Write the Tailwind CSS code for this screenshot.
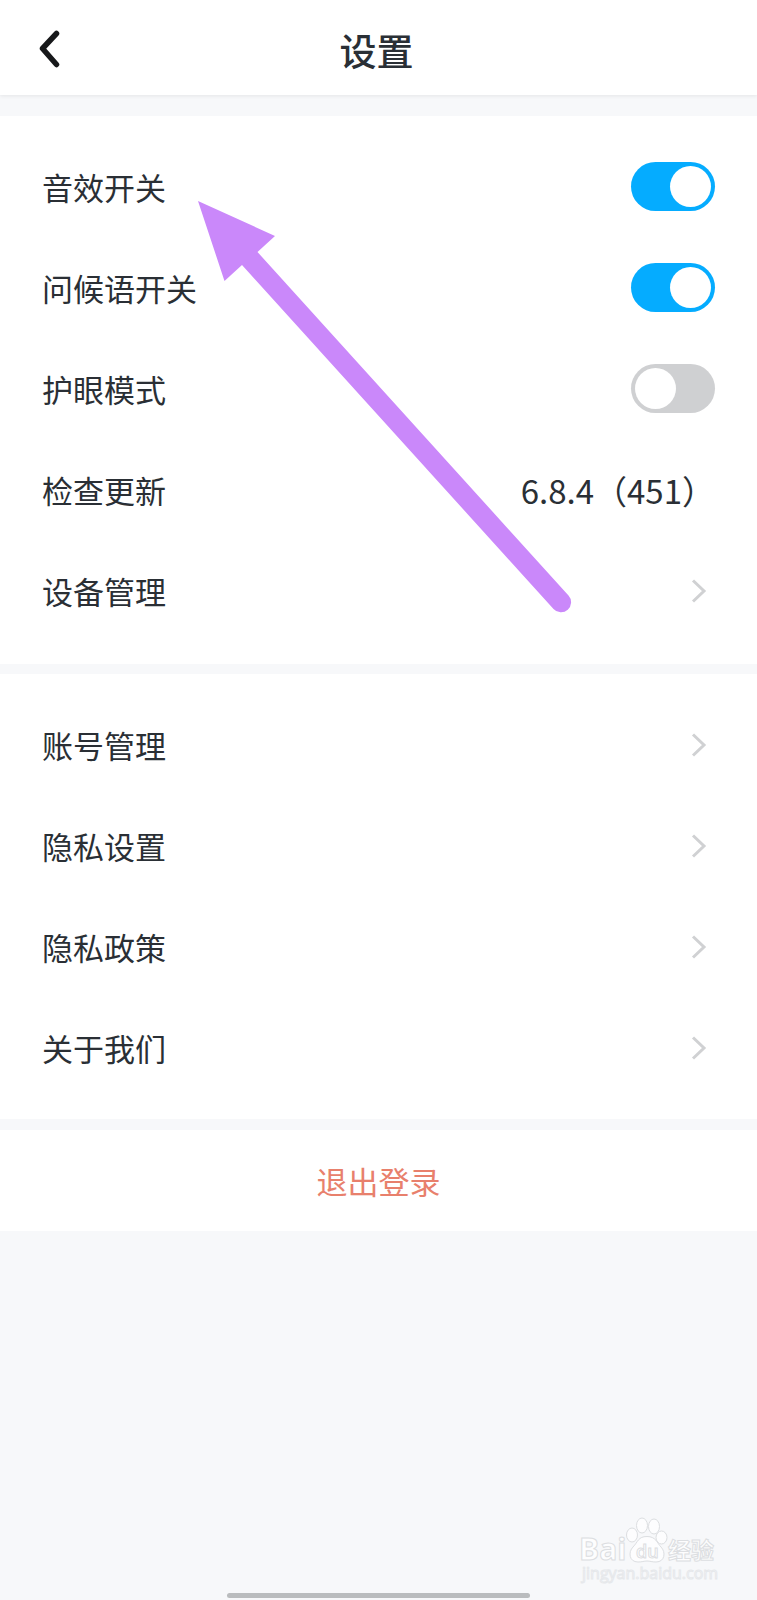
<!DOCTYPE html>
<html lang="zh-CN">
<head>
  <meta charset="UTF-8" />
  <meta name="viewport" content="width=device-width, initial-scale=1.0"/>
  <title>设置</title>
  <script src="https://cdn.jsdelivr.net/npm/@tailwindcss/browser@4"></script>
</head>
<body class="relative flex flex-col min-h-screen bg-[#f7f8fa] text-[#2a2f35] text-[31px] leading-[40px] font-['Noto_Sans_CJK_SC',sans-serif]">

  <header class="grid grid-cols-3 items-center h-[95px] px-9 bg-white shadow-[0_1px_4px_rgba(0,0,0,0.08)]">
    <button type="button" aria-label="返回" class="justify-self-start">
      <svg class="block w-7 h-10" viewBox="0 0 28 40" fill="none" stroke="#17181a" stroke-width="5.500" stroke-linecap="round" stroke-linejoin="round">
        <path d="M20.500 5.500L6.500 20.500L20.500 36.500" />
      </svg>
    </button>
    <h1 class="text-center text-[37px] font-medium pt-1 pr-1">设置</h1>
  </header>

  <main>
    <!-- general -->
    <section class="mt-[21px] pt-5 pb-[23px] px-[42px] bg-white">
      <label class="flex items-center justify-between h-[101px]">
        <span>音效开关</span>
        <input type="checkbox" role="switch" checked class="appearance-none w-[84px] h-[49px] p-1 rounded-full bg-[#cfd0d2] checked:bg-[#05acff] before:block before:size-[41px] before:rounded-full before:bg-white checked:before:ml-auto" />
      </label>
      <label class="flex items-center justify-between h-[101px]">
        <span>问候语开关</span>
        <input type="checkbox" role="switch" checked class="appearance-none w-[84px] h-[49px] p-1 rounded-full bg-[#cfd0d2] checked:bg-[#05acff] before:block before:size-[41px] before:rounded-full before:bg-white checked:before:ml-auto" />
      </label>
      <label class="flex items-center justify-between h-[101px]">
        <span>护眼模式</span>
        <input type="checkbox" role="switch" class="appearance-none w-[84px] h-[49px] p-1 rounded-full bg-[#cfd0d2] checked:bg-[#05acff] before:block before:size-[41px] before:rounded-full before:bg-white checked:before:ml-auto" />
      </label>
      <a href="#update" class="flex items-center justify-between h-[101px]">
        <span>检查更新</span>
        <span class="text-[33px]">6.8.4（451）</span>
      </a>
      <a href="#devices" class="flex items-center justify-between h-[101px]">
        <span>设备管理</span>
        <svg class="w-4 h-6 mr-2" viewBox="0 0 16 24" fill="none" stroke="#d0d1d3" stroke-width="3"><path d="M2 1.500L13 12L2 22.500" /></svg>
      </a>
    </section>

    <!-- account -->
    <section class="mt-[10px] pt-5 pb-[21px] px-[42px] bg-white">
      <a href="#account" class="flex items-center justify-between h-[101px]">
        <span>账号管理</span>
        <svg class="w-4 h-6 mr-2" viewBox="0 0 16 24" fill="none" stroke="#d0d1d3" stroke-width="3"><path d="M2 1.500L13 12L2 22.500" /></svg>
      </a>
      <a href="#privacy" class="flex items-center justify-between h-[101px]">
        <span>隐私设置</span>
        <svg class="w-4 h-6 mr-2" viewBox="0 0 16 24" fill="none" stroke="#d0d1d3" stroke-width="3"><path d="M2 1.500L13 12L2 22.500" /></svg>
      </a>
      <a href="#policy" class="flex items-center justify-between h-[101px]">
        <span>隐私政策</span>
        <svg class="w-4 h-6 mr-2" viewBox="0 0 16 24" fill="none" stroke="#d0d1d3" stroke-width="3"><path d="M2 1.500L13 12L2 22.500" /></svg>
      </a>
      <a href="#about" class="flex items-center justify-between h-[101px]">
        <span>关于我们</span>
        <svg class="w-4 h-6 mr-2" viewBox="0 0 16 24" fill="none" stroke="#d0d1d3" stroke-width="3"><path d="M2 1.500L13 12L2 22.500" /></svg>
      </a>
    </section>

    <button type="button" class="block w-full h-[101px] mt-[11px] bg-white text-[#e8806c]">退出登录</button>
  </main>

  <!-- home indicator -->
  <div class="mt-auto mb-0.5 mx-auto w-2/5 h-[5px] rounded-full bg-[#babcbe]"></div>

  <!-- arrow pointing at the sound switch -->
  <svg class="absolute left-[198px] top-[201px] w-[374px] h-[412px] pointer-events-none" viewBox="198 201 374 412" fill="#ca88fa">
    <path d="M198 201L275 236L257.500 252L568.500 595.500A10 10 0 0 1 553.500 609L242 265L224.500 281Z" />
  </svg>

  <!-- watermark -->
  <svg class="absolute right-9 bottom-3 w-[145px] h-[72px] pointer-events-none" viewBox="576 1516 145 72" fill="#fdfdfe" stroke="#dcdee1" stroke-width="1">
    <g font-family="Open Sans, sans-serif" font-weight="700">
      <text x="579" y="1560" font-size="30">Bai</text>
      <ellipse cx="632" cy="1535" rx="5.500" ry="7" />
      <ellipse cx="642" cy="1525.500" rx="5.500" ry="7.500" />
      <ellipse cx="654" cy="1526.500" rx="5.500" ry="7.500" />
      <ellipse cx="661.500" cy="1537.500" rx="5.500" ry="6.500" />
      <path d="M647 1536.500C656 1536.500 657 1543 661 1547C666 1552 665 1562 656 1562C652 1562 650 1561 647 1561C644 1561 642 1562 638 1562C629 1562 628 1552 633 1547C638 1542 638 1536.500 647 1536.500Z" />
      <text x="636" y="1558" font-size="18" font-weight="600">du</text>
    </g>
    <text x="668" y="1559" font-size="23" font-weight="700" font-family="Noto Sans CJK SC, sans-serif">经验</text>
    <text x="582" y="1579" font-size="16" font-family="Open Sans, sans-serif" stroke="#e6e8eb">jingyan.baidu.com</text>
  </svg>

</body>
</html>
